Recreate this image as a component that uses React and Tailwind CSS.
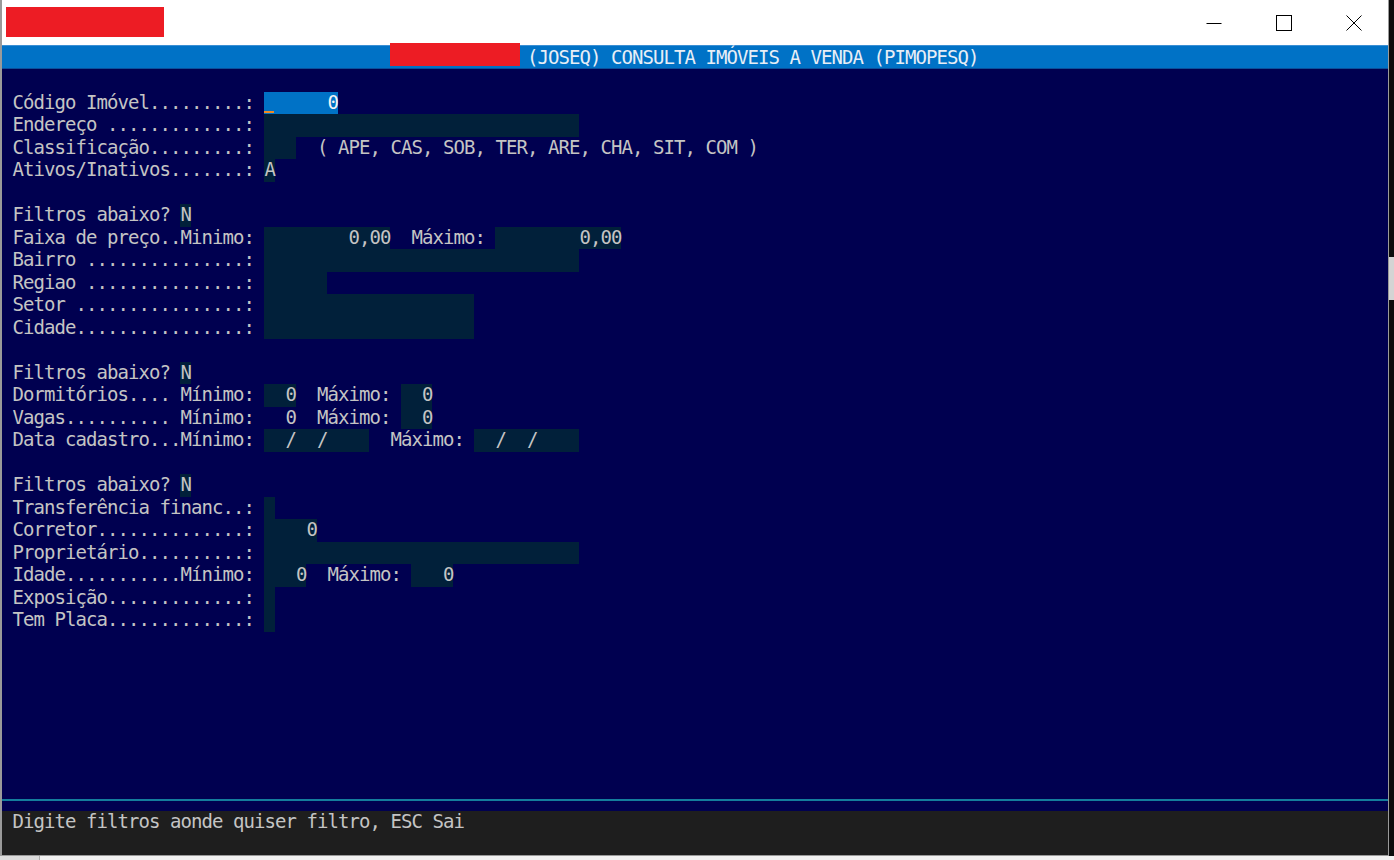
const rows = [
  [],
  [['Código Imóvel.........: '], ['      0', 'cur']],
  [['Endereço .............: '], [' '.repeat(30), 'f']],
  [['Classificação.........: '], ['   ', 'f'], ['  ( APE, CAS, SOB, TER, ARE, CHA, SIT, COM )']],
  [['Ativos/Inativos.......: '], ['A', 'f']],
  [],
  [['Filtros abaixo? '], ['N', 'f']],
  [['Faixa de preço..Minimo: '], ['        0,00', 'f'], ['  Máximo: '], ['        0,00', 'f']],
  [['Bairro ...............: '], [' '.repeat(30), 'f']],
  [['Regiao ...............: '], [' '.repeat(6), 'f']],
  [['Setor ................: '], [' '.repeat(20), 'f']],
  [['Cidade................: '], [' '.repeat(20), 'f']],
  [],
  [['Filtros abaixo? '], ['N', 'f']],
  [['Dormitórios.... Mínimo: '], ['  0', 'f'], ['  Máximo: '], ['  0', 'f']],
  [['Vagas.......... Mínimo: '], ['  0'], ['  Máximo: '], ['  0', 'f']],
  [['Data cadastro...Mínimo: '], ['  /  /    ', 'f'], ['  Máximo: '], ['  /  /    ', 'f']],
  [],
  [['Filtros abaixo? '], ['N', 'f']],
  [['Transferência financ..: '], [' ', 'f']],
  [['Corretor..............: '], ['    0', 'f']],
  [['Proprietário..........: '], [' '.repeat(30), 'f']],
  [['Idade...........Mínimo: '], ['   0', 'f'], ['  Máximo: '], ['   0', 'f']],
  [['Exposição.............: '], [' ', 'f']],
  [['Tem Placa.............: '], [' ', 'f']],
];

const mono = { fontFamily: '"DejaVu Sans Mono", "Liberation Mono", monospace' };

const Cell = ({ text, kind }) => {
  if (kind === 'cur') {
    return (
      <span className="flex whitespace-pre bg-[#0072c6] text-[#f4f4f4]">
        <span className="relative whitespace-pre">
          {text[0]}
          <span className="absolute bottom-[1px] left-0 h-[2.5px] w-[10px] bg-[#f08a24]" />
        </span>
        {text.slice(1)}
      </span>
    );
  }
  if (kind === 'f') {
    return <span className="whitespace-pre bg-[#01203a]">{text}</span>;
  }
  return <span className="whitespace-pre">{text}</span>;
};

export default function App() {
  return (
    <div className="flex h-[860px] w-[1394px] flex-col overflow-hidden bg-[#0c0c0c]">
      <div className="flex h-[856px]">
        <div className="relative flex w-[1389px] flex-col border-r border-l-2 border-b border-[#9a9a9a]">
          {/* window title */}
          <div className="flex h-[45px] items-start bg-white">
            <div className="mt-[7px] ml-[4px] h-[30px] w-[158px] bg-[#ed1c24]" />
            <div className="ml-auto flex h-[45px]">
              <div className="flex w-[70px] items-center justify-center">
                <svg width="16" height="16" viewBox="0 0 16 16">
                  <path d="M0.5 8.5 H15.5" stroke="#000" strokeWidth="1" />
                </svg>
              </div>
              <div className="flex w-[70px] items-center justify-center">
                <svg width="16" height="16" viewBox="0 0 16 16">
                  <rect x="0.5" y="0.5" width="15" height="15" fill="none" stroke="#000" strokeWidth="1" />
                </svg>
              </div>
              <div className="flex w-[69px] items-center justify-center">
                <svg width="16" height="16" viewBox="0 0 16 16">
                  <path d="M0.5 0.5 L15.5 15.5 M15.5 0.5 L0.5 15.5" stroke="#000" strokeWidth="1" />
                </svg>
              </div>
            </div>
          </div>

          {/* console caption */}
          <div
            className="flex h-[24px] items-center border-t border-b border-t-[#3a8fd4] border-b-[#0a4f9a] bg-[#0072c6] pl-[525px] text-[19px] tracking-[-0.94px] text-[#e8eef6]"
            style={mono}
          >
            <span className="whitespace-pre">(JOSEQ) CONSULTA IMÓVEIS A VENDA (PIMOPESQ)</span>
          </div>
          <div className="absolute top-[43px] left-[388px] h-[23px] w-[130px] bg-[#ed1c24]" />

          {/* console body */}
          <div
            className="flex flex-1 flex-col bg-[#000050] pl-[10.5px] text-[19px] tracking-[-0.94px] text-[#c4c4c4]"
            style={mono}
          >
            {rows.map((row, i) => (
              <div key={i} className="flex h-[22.5px] leading-[21px]">
                {row.map(([text, kind], j) => (
                  <Cell key={j} text={text} kind={kind} />
                ))}
              </div>
            ))}
          </div>
          <div className="h-[2px] bg-[#147d9c]" />
          <div className="h-[10px] bg-[#000050]" />
          <div
            className="h-[44px] bg-[#1e1e1e] pl-[10.5px] text-[19px] leading-[21px] tracking-[-0.94px] text-[#c4c4c4]"
            style={mono}
          >
            <span className="whitespace-pre">Digite filtros aonde quiser filtro, ESC Sai</span>
          </div>
        </div>

        {/* background window strip */}
        <div className="flex flex-1 flex-col">
          <div className="h-[257px]" />
          <div className="h-[43px] bg-[#d4d4d4]" />
        </div>
      </div>
      <div className="flex h-[4px] bg-[#f2f2f2]">
        <div className="w-[40px] border-r border-[#b0b0b0] bg-[#dcdcdc]" />
      </div>
    </div>
  );
}
